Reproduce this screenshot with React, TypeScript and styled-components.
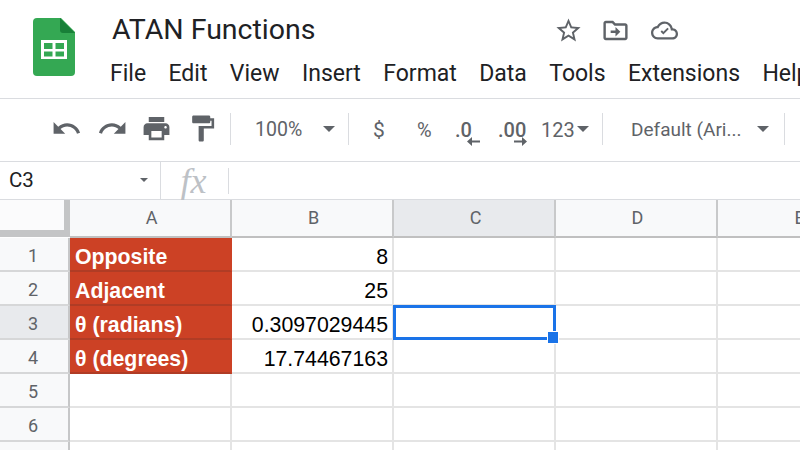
import React from "react";
import styled, { createGlobalStyle } from "styled-components";

const Global = createGlobalStyle`
  html, body { margin: 0; padding: 0; background: #fff; width: 800px; height: 450px; overflow: hidden; }
  #root { width: 800px; height: 450px; overflow: hidden; }
  * { box-sizing: border-box; }
`;

const Page = styled.div`
  width: 800px; height: 450px; overflow: hidden; display: flex; flex-direction: column;
  font-family: Roboto, "Liberation Sans", sans-serif; color: #202124;
`;
const Header = styled.header`
  height: 99px; flex: none; display: flex; padding: 18px 0 0 33px;
  border-bottom: 1px solid #dadce0; overflow: hidden;
`;
const Logo = styled.svg`width: 42px; height: 58px; flex: none;`;
const HeaderText = styled.div`
  margin-left: 35px; margin-top: -6px; display: flex; flex-direction: column; white-space: nowrap;
`;
const TitleRow = styled.div`display: flex; align-items: center; height: 36px; padding-left: 2px;`;
const Title = styled.div`font-size: 28.5px; color: #202124; width: 409px; line-height: 36px;`;
const DocIcons = styled.div`display: flex; align-items: center; gap: 18px; margin-left: 33px;`;
const DocIcon = styled.svg<{ $size: number; $l?: number }>`
  width: ${(p) => p.$size}px; height: ${(p) => p.$size}px; fill: #5f6368; flex: none;
  margin-left: ${(p) => p.$l ?? 0}px;
`;
const Menu = styled.nav`display: flex; gap: 22.4px; margin-top: 9px; font-size: 23px; line-height: 34px;`;

const Toolbar = styled.div`
  height: 63px; flex: none; display: flex; align-items: center; padding: 0 0 3px 51px;
  border-bottom: 1px solid #dadce0; white-space: nowrap; color: #5f6368;
`;
const ToolIcon = styled.svg<{ $w: number }>`
  width: 31px; height: 31px; fill: #5f6368; flex: none; margin-right: ${(p) => p.$w}px;
`;
const Sep = styled.div<{ $l: number; $r: number }>`
  width: 1px; height: 32px; background: #dadce0; flex: none;
  margin-left: ${(p) => p.$l}px; margin-right: ${(p) => p.$r}px;
`;
const ToolText = styled.div<{ $w: number; $l?: number; $size?: number; $bold?: boolean }>`
  width: ${(p) => p.$w}px; margin-left: ${(p) => p.$l ?? 0}px; margin-top: 2px; flex: none;
  font-size: ${(p) => p.$size ?? 20}px; color: #5f6368;
  font-weight: ${(p) => (p.$bold ? 500 : 400)}; text-align: left; line-height: 28px;
`;
const Caret = styled.div<{ $l: number; $size?: number }>`
  flex: none; width: 0; height: 0; margin-left: ${(p) => p.$l}px;
  border-left: ${(p) => p.$size ?? 6.5}px solid transparent;
  border-right: ${(p) => p.$size ?? 6.5}px solid transparent;
  border-top: ${(p) => p.$size ?? 6.5}px solid #5f6368;
`;
const Decimal = styled.div<{ $w: number; $l: number }>`
  position: relative; width: ${(p) => p.$w}px; margin-left: ${(p) => p.$l}px; margin-top: 2px; flex: none;
  font-size: 20px; line-height: 28px; color: #5f6368; font-weight: 500;
`;
const DecimalArrow = styled.svg<{ $l: number }>`
  position: absolute; top: 20px; left: ${(p) => p.$l}px; width: 13px; height: 11px; fill: #5f6368;
`;

const FormulaBar = styled.div`
  height: 38px; flex: none; display: flex; align-items: stretch; border-bottom: 1px solid #dadce0;
`;
const NameBox = styled.div`
  width: 161px; flex: none; display: flex; align-items: center; padding: 0 0 1px 9px;
  border-right: 1px solid #dadce0; font-size: 20.5px; color: #202124;
`;
const NameText = styled.div`width: 131px;`;
const FxBox = styled.div`
  width: 67px; flex: none; display: flex; align-items: center; justify-content: center;
  padding-right: 2px;
`;
const Fx = styled.span`
  font-family: "Liberation Serif", serif; font-style: italic; font-size: 36px; color: #bdc1c6; line-height: 36px;
`;
const FxDivider = styled.div`width: 1px; height: 26px; background: #dadce0; align-self: center;`;

const Sheet = styled.div`
  display: grid; grid-template-columns: 70px repeat(5, 162px); grid-auto-rows: 34px;
  grid-template-rows: 38px; width: 880px;
`;
const Corner = styled.div`
  background: #fbfbfc; border-right: 6px solid #c4c5c6; border-bottom: 7px solid #c4c5c6;
  height: 37px;
`;
const ColHead = styled.div<{ $active?: boolean }>`
  background: ${(p) => (p.$active ? "#e8eaed" : "#f8f9fa")};
  border-right: 2px solid #c8c9ca; border-bottom: 2px solid #c0c0c0;
  display: flex; align-items: center; justify-content: center;
  font-size: 18px; color: #5f6368; padding: 0 0 1px 3px;
`;
const RowHead = styled.div<{ $active?: boolean }>`
  background: ${(p) => (p.$active ? "#e8eaed" : "#f8f9fa")};
  border-right: 2px solid #c6c7c8; border-bottom: 2px solid #d6d7d8;
  display: flex; align-items: center; justify-content: center;
  font-size: 18px; color: #5f6368; padding: 3px 2px 0 0;
`;
const Cell = styled.div<{ $label?: boolean; $num?: boolean }>`
  position: relative;
  background: ${(p) => (p.$label ? "#cc4125" : "#fff")};
  border-right: 2px solid ${(p) => (p.$label ? "#cc4125" : "#e4e4e4")};
  border-bottom: 2px solid ${(p) => (p.$label ? "#b03c25" : "#e4e4e4")};
  color: ${(p) => (p.$label ? "#fff" : "#000")};
  font-family: "Liberation Sans", Arial, sans-serif; font-size: 21.3px;
  font-weight: ${(p) => (p.$label ? 700 : 400)};
  display: flex; align-items: center;
  justify-content: ${(p) => (p.$num ? "flex-end" : "flex-start")};
  padding: 7px 4px 0 5px; white-space: nowrap;
`;
const Selection = styled.div`
  position: absolute; left: -1px; top: -1px; right: -2px; bottom: -2px; border: 3px solid #1a73e8; z-index: 2;
`;
const Handle = styled.div`
  position: absolute; right: -5px; bottom: -6px; width: 10px; height: 11px; background: #1a73e8; z-index: 3;
  box-shadow: 0 0 0 1px #fff;
`;

const menuItems = ["File", "Edit", "View", "Insert", "Format", "Data", "Tools", "Extensions", "Help"];
const rows: [string, string, string][] = [
  ["1", "Opposite", "8"],
  ["2", "Adjacent", "25"],
  ["3", "θ (radians)", "0.3097029445"],
  ["4", "θ (degrees)", "17.74467163"],
  ["5", "", ""],
  ["6", "", ""],
  ["", "", ""],
];
const cols = ["C", "D", "E"];

export default function App() {
  return (
    <Page>
      <Global />
      <Header>
        <Logo viewBox="0 0 42 58">
          <path d="M4 0h24l14 14v40a4 4 0 0 1-4 4H4a4 4 0 0 1-4-4V4a4 4 0 0 1 4-4z" fill="#34a853" />
          <path d="M27 0l15 15H30a3 3 0 0 1-3-3z" fill="#188038" />
          <path d="M8 22h26v19H8z M11 25v6h8.500v-6z M22.500 25v6H31v-6z M11 33.500v5h8.500v-5z M22.500 33.500v5H31v-5z" fill="#fff" fillRule="evenodd" />
        </Logo>
        <HeaderText>
          <TitleRow>
            <Title>ATAN Functions</Title>
            <DocIcons>
              <DocIcon $size={29} viewBox="0 0 24 24"><path d="M22 9.240l-7.190-.62L12 2 9.190 8.630 2 9.240l5.460 4.730L5.820 21 12 17.270 18.180 21l-1.630-7.030L22 9.240zM12 15.400l-3.760 2.270 1-4.280-3.320-2.880 4.380-.38L12 6.100l1.710 4.040 4.380.38-3.320 2.880 1 4.280L12 15.400z" /></DocIcon>
              <DocIcon $size={29} viewBox="0 0 24 24"><path d="M20 6h-8l-2-2H4c-1.100 0-1.990.9-1.990 2L2 18c0 1.100.9 2 2 2h16c1.100 0 2-.9 2-2V8c0-1.100-.9-2-2-2zm0 12H4V6h5.170l2 2H20v10zm-8-1l4-4-4-4v3H8v2h4v3z" /></DocIcon>
              <DocIcon $size={27} $l={3} viewBox="0 0 24 24"><path d="M19.350 10.040C18.670 6.590 15.640 4 12 4 9.110 4 6.600 5.640 5.350 8.040 2.340 8.360 0 10.910 0 14c0 3.310 2.690 6 6 6h13c2.760 0 5-2.240 5-5 0-2.640-2.050-4.780-4.650-4.960zM19 18H6c-2.210 0-4-1.790-4-4 0-2.050 1.530-3.760 3.560-3.970l1.070-.11.5-.95C8.080 7.140 9.940 6 12 6c2.620 0 4.880 1.860 5.390 4.430l.3 1.500 1.530.11c1.560.1 2.780 1.410 2.780 2.960 0 1.650-1.350 3-3 3zm-8-2.500l-2.500-2.500 1.200-1.200 1.300 1.300 3.600-3.600 1.200 1.200-4.800 4.800z" /></DocIcon>
            </DocIcons>
          </TitleRow>
          <Menu>
            {menuItems.map((m) => <span key={m}>{m}</span>)}
          </Menu>
        </HeaderText>
      </Header>
      <Toolbar>
        <ToolIcon $w={15} viewBox="0 0 24 24"><path d="M12.500 8c-2.650 0-5.050.99-6.900 2.600L2 7v9h9l-3.620-3.620c1.390-1.160 3.160-1.880 5.120-1.880 3.540 0 6.550 2.310 7.600 5.500l2.370-.78C21.080 11.030 17.150 8 12.500 8z" /></ToolIcon>
        <ToolIcon $w={13} viewBox="0 0 24 24"><path d="M18.400 10.600C16.550 8.990 14.150 8 11.500 8c-4.650 0-8.580 3.030-9.960 7.220L3.900 16c1.050-3.190 4.050-5.500 7.600-5.500 1.950 0 3.730.72 5.120 1.880L13 16h9V7l-3.600 3.600z" /></ToolIcon>
        <ToolIcon $w={15} viewBox="0 0 24 24"><path d="M19 8H5c-1.660 0-3 1.340-3 3v6h4v4h12v-4h4v-6c0-1.660-1.340-3-3-3zm-3 11H8v-5h8v5zm3-7c-.55 0-1-.45-1-1s.45-1 1-1 1 .45 1 1-.45 1-1 1zm-1-9H6v4h12V3z" /></ToolIcon>
        <ToolIcon $w={0} viewBox="0 0 24 24"><path d="M18 4V3c0-.55-.45-1-1-1H5c-.55 0-1 .45-1 1v4c0 .55.45 1 1 1h12c.55 0 1-.45 1-1V6h1v4H9v11c0 .55.45 1 1 1h2c.55 0 1-.45 1-1v-9h8V4h-3z" /></ToolIcon>
        <Sep $l={12} $r={24} />
        <ToolText $w={47} $size={19.5}>100%</ToolText>
        <Caret $l={21} />
        <Sep $l={13} $r={24} />
        <ToolText $w={14} $size={21}>$</ToolText>
        <ToolText $w={17} $l={30} $size={20}>%</ToolText>
        <Decimal $w={30} $l={21}>
          .0
          <DecimalArrow $l={12} viewBox="0 0 13 11"><path d="M13 4.500H5V1L0 5.500 5 10V6.500h8z" /></DecimalArrow>
        </Decimal>
        <Decimal $w={28} $l={13}>
          .00
          <DecimalArrow $l={16} viewBox="0 0 13 11"><path d="M0 4.500h8V1l5 4.500L8 10V6.500H0z" /></DecimalArrow>
        </Decimal>
        <ToolText $w={36} $l={15} $size={20}>123</ToolText>
        <Caret $l={0} />
        <Sep $l={13} $r={28} />
        <ToolText $w={116} $size={19}>Default (Ari...</ToolText>
        <Caret $l={10} />
        <Sep $l={15} $r={0} />
      </Toolbar>
      <FormulaBar>
        <NameBox>
          <NameText>C3</NameText>
          <Caret $l={0} $size={4.500} />
        </NameBox>
        <FxBox><Fx>fx</Fx></FxBox>
        <FxDivider />
      </FormulaBar>
      <Sheet>
        <Corner />
        <ColHead>A</ColHead>
        <ColHead>B</ColHead>
        {cols.map((c) => <ColHead key={c} $active={c === "C"}>{c}</ColHead>)}
        {rows.map(([num, label, value], i) => (
          <React.Fragment key={i}>
            <RowHead $active={i === 2}>{num}</RowHead>
            <Cell $label={i < 4}>{label}</Cell>
            <Cell $num>{value}</Cell>
            <Cell>
              {i === 2 && <Selection><Handle /></Selection>}
            </Cell>
            <Cell />
            <Cell />
          </React.Fragment>
        ))}
      </Sheet>
    </Page>
  );
}
